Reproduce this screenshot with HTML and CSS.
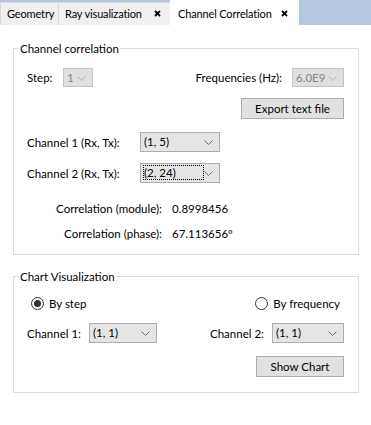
FILE: index.html
```html
<!DOCTYPE html>
<html lang="en">
<head>
  <meta charset="UTF-8" />
  <title>Channel Correlation</title>
  <link rel="stylesheet" href="styles.css">
</head>
<body>
  <div class="tabs">
    <div class="tab tab-geo">Geometry</div>
    <div class="tab tab-ray"><span>Ray visualization</span><svg class="close" width="7" height="7" viewBox="0 0 7 7"><path d="M1 1L6 6M6 1L1 6"/></svg></div>
    <div class="tab active"><span>Channel Correlation</span><svg class="close" width="7" height="7" viewBox="0 0 7 7"><path d="M1 1L6 6M6 1L1 6"/></svg></div>
  </div>

  <div class="panel">
    <fieldset class="group">
      <legend>Channel correlation</legend>

      <div class="row split">
        <div class="field">
          <span class="lbl step-lbl">Step:</span>
          <div class="combo disabled w-step">1 <svg class="chev" width="9" height="5" viewBox="0 0 9 5"><path d="M0.5 0.5L4.5 4.5L8.5 0.5"/></svg></div>
        </div>
        <div class="field">
          <span class="lbl">Frequencies (Hz):</span>
          <div class="combo disabled w-freq">6.0E9 <svg class="chev" width="9" height="5" viewBox="0 0 9 5"><path d="M0.5 0.5L4.5 4.5L8.5 0.5"/></svg></div>
        </div>
      </div>

      <div class="row end gap-export">
        <button class="btn w-export">Export text file</button>
      </div>

      <div class="row gap-ch1">
        <span class="lbl ch-lbl">Channel 1 (Rx, Tx):</span>
        <div class="combo w-ch">(1, 5) <svg class="chev" width="9" height="5" viewBox="0 0 9 5"><path d="M0.5 0.5L4.5 4.5L8.5 0.5"/></svg></div>
      </div>

      <div class="row gap-ch2">
        <span class="lbl ch-lbl">Channel 2 (Rx, Tx):</span>
        <div class="combo w-ch"><span class="focus">(2, 24)</span> <svg class="chev" width="9" height="5" viewBox="0 0 9 5"><path d="M0.5 0.5L4.5 4.5L8.5 0.5"/></svg></div>
      </div>

      <div class="row result gap-mod">
        <span class="res-lbl">Correlation (module):</span>
        <span class="res-val">0.8998456</span>
      </div>

      <div class="row result gap-phase">
        <span class="res-lbl">Correlation (phase):</span>
        <span class="res-val">67.113656º</span>
      </div>
    </fieldset>

    <fieldset class="group chart">
      <legend>Chart Visualization</legend>

      <div class="row split radios">
        <label class="radio"><span class="dot checked"></span>By step</label>
        <label class="radio"><span class="dot"></span>By frequency</label>
      </div>

      <div class="row split gap-chart">
        <div class="field">
          <span class="lbl short-lbl">Channel 1:</span>
          <div class="combo w-c1">(1, 1) <svg class="chev" width="9" height="5" viewBox="0 0 9 5"><path d="M0.5 0.5L4.5 4.5L8.5 0.5"/></svg></div>
        </div>
        <div class="field">
          <span class="lbl short-lbl">Channel 2:</span>
          <div class="combo w-c2">(1, 1) <svg class="chev" width="9" height="5" viewBox="0 0 9 5"><path d="M0.5 0.5L4.5 4.5L8.5 0.5"/></svg></div>
        </div>
      </div>

      <div class="row end gap-show">
        <button class="btn w-show">Show Chart</button>
      </div>
    </fieldset>
  </div>
</body>
</html>
```

FILE: styles.css
```css
* {
  box-sizing: border-box;
}

body {
  margin: 0;
  width: 371px;
  height: 425px;
  background: #fff;
  font-family: Lato, 'Noto Sans', sans-serif;
  font-size: 11.5px;
  color: #000;
}

/* tab strip */
.tabs {
  display: flex;
  align-items: flex-end;
  height: 25px;
  background: #b5c8df;
}

.tab {
  display: flex;
  align-items: center;
  justify-content: space-between;
  height: 23px;
  padding: 0 9px 1px 6px;
  background: #f0f0f0;
  border: 1px solid #d9d9d9;
  border-bottom: none;
  margin-right: -1px;
  white-space: nowrap;
  font-size: 11px;
  letter-spacing: -0.15px;
}

.tab-geo { width: 59px; }
.tab-ray { width: 113px; }

.tab.active {
  width: 129px;
  height: 26px;
  margin-bottom: -1px;
  padding: 0 10px 0 7px;
  background: #fff;
  border-color: #fff;
}

.close {
  flex: none;
}

.close path {
  stroke: #000;
  stroke-width: 1.8;
  fill: none;
}

/* panel + groups */
.panel {
  padding: 16px 12px 0 13px;
}

.group {
  margin: 0;
  padding: 12px 14px 13px 13px;
  border: 1px solid #dcdcdc;
  min-width: 0;
}

.group legend {
  padding: 0 1px;
  margin-left: -8px;
  line-height: 15px;
}

.chart {
  margin-top: 14px;
  padding-bottom: 15px;
}

.row {
  display: flex;
  align-items: center;
}

.split {
  justify-content: space-between;
}

.end {
  justify-content: flex-end;
}

.field {
  display: flex;
  align-items: center;
}

.lbl {
  white-space: nowrap;
}

.step-lbl { width: 36px; }
.field .lbl + .combo { margin-left: 10px; }
.field .step-lbl + .combo { margin-left: 0; }
.ch-lbl { width: 113px; }
.short-lbl { width: 62px; }
.field .short-lbl + .combo { margin-left: 0; }

/* combo boxes */
.combo {
  position: relative;
  height: 20px;
  line-height: 18px;
  padding-left: 3px;
  background: #e5e5e5;
  border: 1px solid #adadad;
  white-space: nowrap;
}

.combo .chev {
  position: absolute;
  right: 6px;
  top: 7px;
}

.chev path {
  fill: none;
  stroke: #6e6e6e;
  stroke-width: 1;
}

.combo.disabled {
  height: 19px;
  line-height: 17px;
  color: #838383;
  background: #e0e0e0;
  border-color: #c4c4c4;
}

.combo.disabled .chev path {
  stroke: #b0b0b0;
}

.w-step { width: 30px; }
.w-freq { width: 52px; }
.w-ch { width: 80px; }
.w-c1 { width: 68px; }
.w-c2 { width: 72px; }

.focus {
  display: inline-block;
  width: 59px;
  line-height: 13px;
  outline: 1px dotted #000;
}

/* buttons */
.btn {
  height: 21px;
  padding: 0;
  font: inherit;
  color: #000;
  background: #e1e1e1;
  border: 1px solid #adadad;
}

.w-export { width: 103px; }
.w-show { width: 88px; }

.gap-export { margin-top: 11px; }
.gap-ch1 { margin-top: 13px; }
.gap-ch2 { margin-top: 11px; }

/* correlation results */
.result {
  height: 15px;
  line-height: 15px;
}

.res-lbl {
  width: 135px;
  text-align: right;
}

.res-val {
  margin-left: 10px;
}

.gap-mod { margin-top: 18px; }
.gap-phase { margin-top: 10px; }

/* radios */
.radios {
  height: 15px;
  padding: 0 4px;
}

.radio {
  display: flex;
  align-items: center;
  gap: 5px;
}

.dot {
  position: relative;
  width: 13px;
  height: 13px;
  border: 1px solid #333;
  border-radius: 50%;
  background: #fff;
}

.dot.checked::after {
  content: "";
  position: absolute;
  left: 2px;
  top: 2px;
  width: 7px;
  height: 7px;
  border-radius: 50%;
  background: #333;
}

.gap-chart { margin-top: 12px; }
.gap-show { margin-top: 13px; }
```
